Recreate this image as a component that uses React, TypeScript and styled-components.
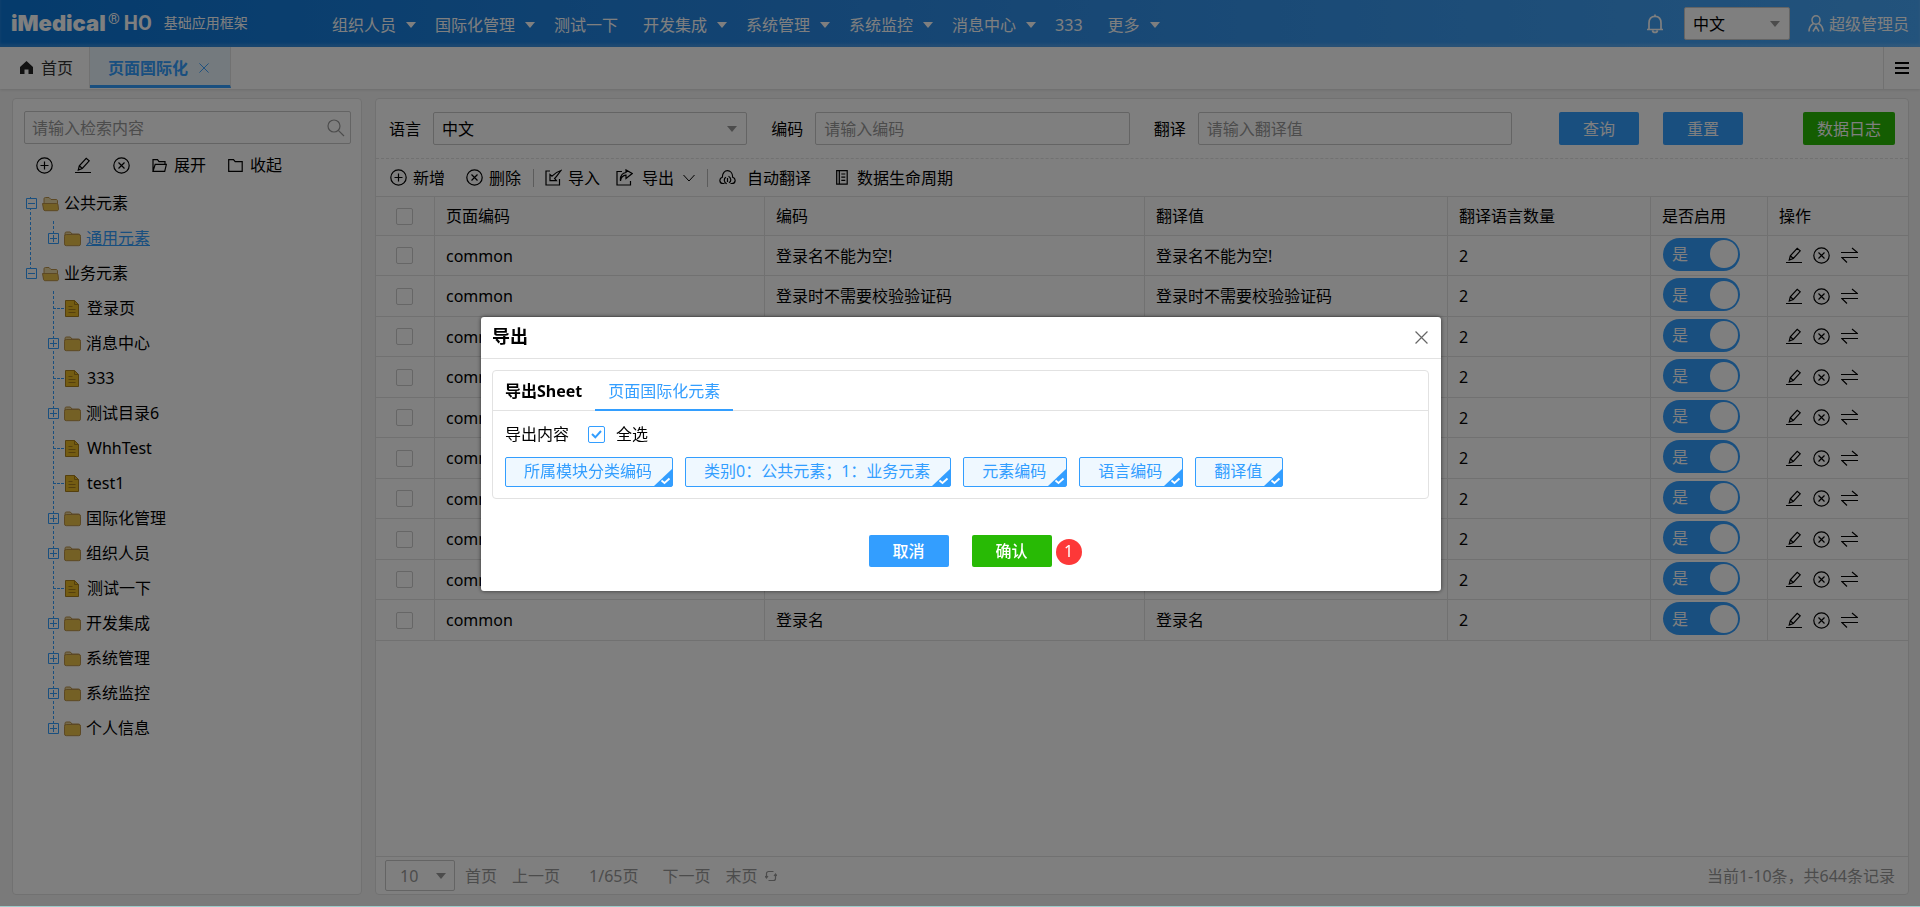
import React from "react";
import styled, { createGlobalStyle } from "styled-components";

const BLUE = "#339eff";
const GREEN = "#28ba05";
const LINE = "#e2e2e2";
const MUTED = "#999";

const GlobalStyle = createGlobalStyle`
  * { box-sizing: border-box; }
  body {
    margin: 0;
    background: #f5f5f5;
    color: #000;
    font-family: "Noto Sans", "Noto Sans CJK SC", sans-serif;
    font-size: 16px;
    line-height: 24px;
  }
  button, input, select { font: inherit; color: inherit; margin: 0; }
  button { border: 0; padding: 0; background: none; cursor: pointer; }
  ul { list-style: none; margin: 0; padding: 0; }
  svg { display: block; flex: none; }
`;

const Page = styled.div`
  display: flex;
  flex-direction: column;
  min-height: 100vh;
  border-bottom: 1px solid #9ccac9;
`;

/* ---------- header ---------- */

const Header = styled.header`
  display: flex;
  align-items: center;
  height: 47px;
  padding: 0 11px 0 11px;
  color: #fff;
  background: linear-gradient(to right, #0a76d8, #2a8ae6 45%, #46a6f8);
  box-shadow: inset 0 -3px 3px rgba(255, 255, 255, 0.15);
`;

const Brand = styled.div`
  display: flex;
  align-items: center;
  width: 321px;
  padding-bottom: 2px;
`;

const Logo = styled.span`
  width: 95px;
  font-family: Inter, sans-serif;
  font-weight: 900;
  font-size: 22px;
`;

const Registered = styled.span`
  align-self: flex-start;
  margin: 0 4px 0 2px;
  font-family: Roboto, sans-serif;
  font-size: 15px;
  line-height: 16px;
`;

const LogoSuffix = styled.span`
  font-family: Roboto, sans-serif;
  font-weight: 700;
  font-size: 20px;
`;

const ProductName = styled.span`
  margin-left: 12px;
  font-size: 14px;
`;

const MainNav = styled.nav`
  display: flex;
  flex: 1;
  padding-top: 2px;
`;

const NavItem = styled.a<{ $plain?: boolean }>`
  display: flex;
  align-items: center;
  gap: 10px;
  margin-right: ${(p) => (p.$plain ? 25 : 19)}px;
  color: #fff;
  text-decoration: none;
  white-space: nowrap;
`;

const HeaderTools = styled.div`
  display: flex;
  align-items: center;
`;

const LanguageSlot = styled.div`
  width: 106px;
  margin: 0 18px 0 20px;
  color: #000;
`;

const UserButton = styled.button`
  display: flex;
  align-items: center;
  gap: 5px;
  color: #fff;
`;

/* ---------- fields ---------- */

const SelectWrap = styled.div<{ $small?: boolean }>`
  display: grid;
  align-items: center;
  height: ${(p) => (p.$small ? 31 : 33)}px;
  border: 1px solid #c8c8c8;
  border-radius: 2px;
  background: #fff;

  select {
    grid-area: 1 / 1;
    width: 100%;
    height: 100%;
    padding: 0 ${(p) => (p.$small ? 14 : 8)}px;
    border: 0;
    background: none;
    appearance: none;
  }
  svg {
    grid-area: 1 / 1;
    justify-self: end;
    margin-right: ${(p) => (p.$small ? 8 : 9)}px;
    color: ${MUTED};
    pointer-events: none;
  }
`;

const TextInput = styled.input`
  width: 100%;
  height: 33px;
  padding: 0 8px;
  border: 1px solid #c8c8c8;
  border-radius: 2px;
  background: #fff;
  &::placeholder { color: ${MUTED}; opacity: 1; }
`;

const Button = styled.button<{ $color?: string; $strong?: boolean }>`
  position: relative;
  height: ${(p) => (p.$strong ? 32 : 33)}px;
  min-width: 80px;
  padding: 0 14px;
  border-radius: 2px;
  background: ${(p) => p.$color ?? BLUE};
  color: #fff;
  font-weight: ${(p) => (p.$strong ? 500 : 400)};
  white-space: nowrap;
`;

/* ---------- page tabs ---------- */

const TabStrip = styled.div`
  display: flex;
  height: 42px;
  background: #fff;
  box-shadow: 0 1px 3px rgba(0, 0, 0, 0.12);
`;

const PageTab = styled.button<{ $active?: boolean }>`
  display: flex;
  align-items: center;
  gap: ${(p) => (p.$active ? 11 : 8)}px;
  height: 41px;
  padding: ${(p) => (p.$active ? "3px 21px 0 18px" : "0 16px 0 20px")};
  border-right: 1px solid ${LINE};
  border-bottom: ${(p) => (p.$active ? `3px solid ${BLUE}` : "0")};
  background: ${(p) => (p.$active ? "#e8f4fc" : "#fff")};
  color: ${(p) => (p.$active ? BLUE : "#333")};
  font-weight: ${(p) => (p.$active ? 700 : 400)};
`;

const TabMenuButton = styled.button`
  display: flex;
  align-items: center;
  justify-content: center;
  width: 37px;
  margin-left: auto;
  border-left: 1px solid ${LINE};
`;

/* ---------- panels ---------- */

const Main = styled.main`
  display: flex;
  flex: 1;
  gap: 13px;
  padding: 9px 11px 11px 12px;
`;

const Panel = styled.section`
  display: flex;
  flex-direction: column;
  border: 1px solid ${LINE};
  border-radius: 4px;
  background: #fff;
`;

const TreePanel = styled(Panel)`
  width: 350px;
  flex: none;
  padding: 12px 10px 0 11px;
`;

const SearchBox = styled.div`
  display: flex;
  align-items: center;
  height: 33px;
  padding-right: 5px;
  border: 1px solid #c8c8c8;
  border-radius: 2px;
  color: ${MUTED};

  input {
    flex: 1;
    min-width: 0;
    padding: 0 7px;
    border: 0;
    background: none;
    outline: none;
  }
  input::placeholder { color: ${MUTED}; opacity: 1; }
`;

const TreeTools = styled.div`
  display: flex;
  align-items: center;
  height: 42px;
  padding-left: 12px;
  gap: 22px;
`;

const ToolButton = styled.button<{ $gap?: number }>`
  display: flex;
  align-items: center;
  gap: ${(p) => p.$gap ?? 7}px;
  white-space: nowrap;
`;

const dashes = `repeating-linear-gradient(to bottom, ${BLUE} 0 3px, transparent 3px 5px)`;

const Tree = styled.ul`
  padding-left: 2px;
  background: ${dashes} no-repeat 6px 11px / 1px 82px;
`;

const Branch = styled.ul`
  margin-left: 22px;
  background: ${dashes} no-repeat 5px 0 / 1px calc(100% - 14px);
`;

const TreeRow = styled.div`
  display: flex;
  align-items: center;
  gap: 5px;
  height: 35px;
`;

const FileStem = styled.span`
  width: 11px;
  margin: 0 -5px 0 5px;
  border-top: 1px dashed ${BLUE};
`;

const TreeLabel = styled.a<{ $active?: boolean }>`
  padding-bottom: 2px;
  color: ${(p) => (p.$active ? BLUE : "#000")};
  text-decoration: ${(p) => (p.$active ? "underline" : "none")};
`;

/* ---------- data panel ---------- */

const DataPanel = styled(Panel)`
  flex: 1;
  min-width: 0;
`;

const FilterForm = styled.form`
  display: flex;
  gap: 24px;
  padding: 13px 13px 13px 13px;
  border-bottom: 1px dashed ${LINE};
`;

const Field = styled.div`
  display: flex;
  flex: 1;
  align-items: center;
  gap: 12px;
  white-space: nowrap;

  > :last-child { flex: 1; min-width: 0; }
`;

const FilterActions = styled.div`
  display: flex;
  gap: 24px;
  margin-left: 23px;

  > :last-child { margin-left: 36px; }
`;

const Toolbar = styled.div`
  display: flex;
  align-items: center;
  gap: 22px;
  height: 37px;
  padding-left: 14px;
`;

const ToolGroup = styled.div<{ $gap?: number }>`
  display: flex;
  align-items: center;
  gap: ${(p) => p.$gap ?? 21}px;

  & + & {
    margin-left: -10px;
    padding-left: 12px;
    background: linear-gradient(#b8b8b8, #b8b8b8) no-repeat 0 50% / 1px 18px;
  }
`;

const Table = styled.table`
  width: 100%;
  table-layout: fixed;
  border-collapse: separate;
  border-spacing: 0;
  border-top: 1px solid ${LINE};

  th, td {
    height: 40px;
    padding: 0 11px;
    border-right: 1px solid ${LINE};
    border-bottom: 1px solid ${LINE};
    text-align: left;
    font-weight: 400;
    white-space: nowrap;
    overflow: hidden;
  }
  th { height: 39px; background: #fcfcfc; }
  tbody tr:nth-child(even) td { height: 41px; }
  th:first-child, td:first-child { padding: 0 0 0 20px; }
  th:last-child, td:last-child { border-right: 0; }
`;

const Col = styled.col<{ $w: number }>`
  width: ${(p) => p.$w}px;
`;

const CheckBox = styled.input`
  display: block;
  width: 17px;
  height: 17px;
  border: 1px solid #ccc;
  border-radius: 2px;
  background: #fff;
  appearance: none;
`;

const SwitchTrack = styled.label`
  display: flex;
  align-items: center;
  justify-content: space-between;
  width: 77px;
  height: 33px;
  margin-bottom: 3px;
  margin-left: 1px;
  padding: 0 2px 0 9px;
  border-radius: 17px;
  background: ${BLUE};
  color: #fff;

  input {
    position: absolute;
    opacity: 0;
    pointer-events: none;
  }
`;

const SwitchKnob = styled.span`
  width: 28px;
  height: 28px;
  border-radius: 50%;
  background: #fff;
`;

const RowActions = styled.div`
  display: flex;
  gap: 11px;
  padding-left: 7px;
`;

const Pager = styled.footer`
  display: flex;
  align-items: center;
  height: 38px;
  margin-top: auto;
  padding: 0 13px 0 9px;
  border-top: 1px solid ${LINE};
  color: ${MUTED};
`;

const PageSize = styled.div`
  width: 70px;
  margin-right: 10px;
`;

const PagerLinks = styled.div`
  display: flex;
  align-items: center;
  gap: 15px;
`;

const PageNumber = styled.span`
  margin: 0 9px 0 14px;
`;

const RefreshButton = styled.button`
  margin-left: -7px;
`;

const Total = styled.span`
  margin-left: auto;
`;

/* ---------- dialog ---------- */

const Backdrop = styled.div`
  position: fixed;
  inset: 0 0 1px;
  display: flex;
  align-items: center;
  justify-content: center;
  padding: 2px 0 0 2px;
  background: rgba(0, 0, 0, 0.5);
`;

const Dialog = styled.div`
  width: 50vw;
  min-width: 860px;
  border-radius: 3px;
  background: #fff;
  box-shadow: 0 0 4px rgba(0, 0, 0, 0.6);
`;

const DialogHead = styled.div`
  display: flex;
  align-items: center;
  justify-content: space-between;
  height: 42px;
  padding: 0 13px 0 11px;
  border-bottom: 1px solid ${LINE};

  h2 {
    margin: 0;
    padding-bottom: 4px;
    font-size: 18px;
    line-height: 24px;
    font-weight: 700;
  }
`;

const ExportBox = styled.div`
  margin: 11px 12px 0 11px;
  border: 1px solid ${LINE};
  border-radius: 4px;
`;

const SheetTabs = styled.div`
  display: flex;
  gap: 13px;
  height: 40px;
  padding-left: 12px;
  border-bottom: 1px solid ${LINE};
`;

const SheetCaption = styled.strong`
  line-height: 40px;
`;

const SheetTab = styled.button`
  height: 40px;
  padding: 2px 13px 0;
  border-bottom: 2px solid ${BLUE};
  color: ${BLUE};
`;

const ExportBody = styled.div`
  padding: 11px 12px;
`;

const CheckLine = styled.div`
  display: flex;
  align-items: center;
  height: 24px;
  margin-bottom: 11px;

  label { display: flex; align-items: center; gap: 11px; margin-left: 19px; }
`;

const TickBox = styled.span`
  display: grid;
  place-items: center;
  width: 17px;
  height: 17px;

  > * { grid-area: 1 / 1; }
  input { border-color: ${BLUE}; }
  svg { color: ${BLUE}; pointer-events: none; }
`;

const Chips = styled.div`
  display: flex;
  gap: 12px;
`;

const Chip = styled.button`
  position: relative;
  height: 30px;
  padding: 0 20px 2px 18px;
  border: 1px solid ${BLUE};
  border-radius: 2px;
  background: #eff8ff;
  color: ${BLUE};
  white-space: nowrap;

  svg { position: absolute; right: 0; bottom: 0; }
`;

const DialogFoot = styled.div`
  display: flex;
  justify-content: center;
  gap: 23px;
  padding: 36px 2px 24px 0;
`;

const StepBadge = styled.span`
  position: absolute;
  left: 84px;
  top: 4px;
  width: 26px;
  height: 26px;
  border-radius: 50%;
  background: #fd3838;
  color: #fff;
  font-weight: 400;
  line-height: 25px;
`;

/* ---------- icons ---------- */

const Caret = () => (
  <svg width="10" height="6" viewBox="0 0 10 6" fill="currentColor"><path d="M0 0h10L5 6z" /></svg>
);

const stroke = { fill: "none", stroke: "currentColor", strokeWidth: 1.2 };

const PlusCircle = () => (
  <svg width="17" height="17" viewBox="0 0 17 17" {...stroke}><circle cx="8.500" cy="8.500" r="7.700" /><path d="M8.500 4.500v8M4.500 8.500h8" /></svg>
);
const CrossCircle = () => (
  <svg width="17" height="17" viewBox="0 0 17 17" {...stroke}><circle cx="8.500" cy="8.500" r="7.700" /><path d="M5.500 5.500l6 6M11.500 5.500l-6 6" /></svg>
);
const Pencil = () => (
  <svg width="16" height="17" viewBox="0 0 16 17" {...stroke}><path d="M3.300 13l1-4.200L11.200 1.300l3 2.600-6.900 7.600z M4.300 8.800l3 2.700M0 15.500h16" /></svg>
);
const Swap = () => (
  <svg width="17" height="17" viewBox="0 0 17 17" {...stroke}><path d="M0 5.500h16.500L11 1M17 10.500H.800L6 15.500" /></svg>
);
const FolderOpenLine = () => (
  <svg width="15" height="13" viewBox="0 0 15 13" {...stroke}><path d="M1 12.300V.700h4.500l1.500 2h6v2.600M1 12.300l2.200-7h11.200l-1.700 7z" /></svg>
);
const FolderLine = () => (
  <svg width="15" height="13" viewBox="0 0 15 13" {...stroke}><path d="M.700 12.300V.700h4.800l1.700 2h7v9.600z" /></svg>
);
const ImportIcon = () => (
  <svg width="17" height="17" viewBox="0 0 17 17" {...stroke}><path d="M5 2H1v14h13.500v-6" /><path d="M5 5.500v6.200h6.400L9.600 9.500C12 7.500 13.200 5 16 1.500c-3.500 1-6 2.500-9 5.700z" /></svg>
);
const ExportIcon = () => (
  <svg width="17" height="17" viewBox="0 0 17 17" {...stroke}><path d="M6 2.500H1V16h13.500v-4" /><path d="M4.500 12c.5-3.500 2-5.500 5.500-5.800V9.500l6.200-5L10 .900v2.600C6 4.200 4 7.500 4.500 12z" /></svg>
);
const ChevronDown = () => (
  <svg width="12" height="8" viewBox="0 0 12 8" {...stroke} strokeWidth="1"><path d="M.500 1L6 7l5.500-6" /></svg>
);
const CloudSync = () => (
  <svg width="17" height="15" viewBox="0 0 17 15" {...stroke}><path d="M5.500 13.500H4C.300 13.500-.300 8.500 3.300 7.300 3.300-1.500 13.700-1.500 13.700 7.300c3.600 1.200 3 6.200-.700 6.200h-1.500" /><path d="M7.700 13.800C4.500 12 4.600 8.300 7 7.300M9.500 6.200c3 1.600 3 5.500.400 6.600M8.500 8v4" /></svg>
);
const Notebook = () => (
  <svg width="12" height="15" viewBox="0 0 12 15" {...stroke}><path d="M.700.700h10.500v13.500H.700zM3.300.700v13.500M5.300 4h4M5.300 7.200h4M5.300 10.400h4" /></svg>
);
const SearchIcon = () => (
  <svg width="18" height="18" viewBox="0 0 18 18" {...stroke}><circle cx="7" cy="7" r="6" /><path d="M11.300 11.300l5.700 5.700" /></svg>
);
const HomeIcon = () => (
  <svg width="13" height="13" viewBox="0 0 13 13" fill="#222"><path d="M6.500 0L13 6v7H8.500V8.500h-4V13H0V6z" /></svg>
);
const Cross = ({ size, color = "currentColor" }: { size: number; color?: string }) => (
  <svg width={size} height={size} viewBox="0 0 12 12" fill="none" stroke={color} strokeWidth="1.100"><path d="M.500.500l11 11M11.500.500l-11 11" /></svg>
);
const MenuIcon = () => (
  <svg width="14" height="12" viewBox="0 0 14 12"><path d="M0 0h14v2H0zM0 5h14v2H0zM0 10h14v2H0z" /></svg>
);
const Bell = () => (
  <svg width="18" height="20" viewBox="0 0 18 20" fill="none" stroke="#fff" strokeWidth="1.700"><path d="M1 15.500h16M3 15V9c0-4 2.200-6.700 6-6.700S15 5 15 9v6M9 .500v2M6.500 16.500c.5 2.600 4.500 2.600 5 0" /></svg>
);
const UserIcon = () => (
  <svg width="16" height="17" viewBox="0 0 16 17" fill="none" stroke="#fff" strokeWidth="1.500"><ellipse cx="8" cy="5" rx="4" ry="4.200" /><path d="M5.500 8.500C2.800 10 1 12.500 1 16.500M10.500 8.500c2.700 1.500 4.500 4 4.500 8M5 16.500l3-5 3 5" /></svg>
);
const Refresh = () => (
  <svg width="12" height="12" viewBox="0 0 12 12" {...stroke}><path d="M1.500 7.500v-4a2 2 0 0 1 2-2h5M10.500 4.500v4a2 2 0 0 1-2 2h-5M0 6l1.500 2L3 6M9 6l1.500-2L12 6" /></svg>
);
const Expander = ({ open }: { open?: boolean }) => (
  <svg width="11" height="11" viewBox="0 0 11 11" fill="#fff" stroke={BLUE}><path d={`M.500.500h10v10h-10zM2 5.500h7${open ? "" : "M5.500 2v7"}`} /></svg>
);
const FolderIcon = ({ open }: { open?: boolean }) => (
  <svg width="17" height="16" viewBox="0 0 17 16" stroke="#b89048">
    {open ? (
      <>
        <path d="M2 13.500V3C2 2 2.500 1.500 3.500 1.500H7l2 2h5c1 0 1.500.500 1.500 1.500v8.500z" fill="#ead9a4" />
        <path d="M.500 7.500h14.200c.8 0 1.200.500 1.300 1.200l.5 4.300c0 1-.500 1.700-1.500 1.700H3.200c-1 0-1.500-.500-1.700-1.500z" fill="#e9c14a" />
      </>
    ) : (
      <>
        <path d="M1 5V2.700C1 1.500 1.500 1 2.500 1h3.800L8 3h6.500c1 0 1.500.500 1.500 2z" fill="#e8d49a" />
        <rect x=".500" y="3.500" width="16" height="11.200" rx="1.800" fill="#e9c14a" />
      </>
    )}
  </svg>
);
const FileIcon = () => (
  <svg width="18" height="17" viewBox="0 0 18 17" stroke="#a87f1c"><path d="M1.500.500h9l4 4v12h-13z" fill="#e8b824" /><path d="M10.500.500v4h4M4.500 6.500h4M4.500 9.500h7M4.500 12.500h7" fill="none" /></svg>
);
const Tick = () => (
  <svg width="11" height="9" viewBox="0 0 11 9" fill="none" stroke="currentColor" strokeWidth="2"><path d="M1 4l3.300 3.300L10 1" /></svg>
);
const ChipCorner = () => (
  <svg width="18" height="17" viewBox="0 0 18 17"><path d="M18 0v17H0z" fill={BLUE} /><path d="M7.500 11.500l3 2.500 5-4.500" fill="none" stroke="#fff" strokeWidth="1.800" /></svg>
);

/* ---------- data ---------- */

const navItems: [string, boolean][] = [
  ["组织人员", true], ["国际化管理", true], ["测试一下", false], ["开发集成", true],
  ["系统管理", true], ["系统监控", true], ["消息中心", true], ["333", false], ["更多", true],
];

type Node = { name: string; file?: boolean; active?: boolean };

const tree: { name: string; items: Node[] }[] = [
  { name: "公共元素", items: [{ name: "通用元素", active: true }] },
  {
    name: "业务元素",
    items: [
      { name: "登录页", file: true }, { name: "消息中心" }, { name: "333", file: true },
      { name: "测试目录6" }, { name: "WhhTest", file: true }, { name: "test1", file: true },
      { name: "国际化管理" }, { name: "组织人员" }, { name: "测试一下", file: true },
      { name: "开发集成" }, { name: "系统管理" }, { name: "系统监控" }, { name: "个人信息" },
    ],
  },
];

const rows = [
  "登录名不能为空!", "登录时不需要校验验证码", "登录", "密码", "验证码", "忘记密码",
  "请输入密码", "用户", "登录密码", "登录名",
];

const chips = ["所属模块分类编码", "类别0：公共元素；1：业务元素", "元素编码", "语言编码", "翻译值"];

const widths = [59, 330, 380, 303, 203, 117, 140];
const heads = ["页面编码", "编码", "翻译值", "翻译语言数量", "是否启用", "操作"];

export default function App() {
  return (
    <>
      <GlobalStyle />
      <Page>
        <Header>
          <Brand>
            <Logo>iMedical</Logo>
            <Registered>®</Registered>
            <LogoSuffix>HO</LogoSuffix>
            <ProductName>基础应用框架</ProductName>
          </Brand>
          <MainNav>
            {navItems.map(([name, menu]) => (
              <NavItem key={name} href="#" $plain={!menu}>{name}{menu && <Caret />}</NavItem>
            ))}
          </MainNav>
          <HeaderTools>
            <button aria-label="通知"><Bell /></button>
            <LanguageSlot>
              <SelectWrap>
                <select aria-label="界面语言"><option>中文</option></select>
                <Caret />
              </SelectWrap>
            </LanguageSlot>
            <UserButton><UserIcon />超级管理员</UserButton>
          </HeaderTools>
        </Header>

        <TabStrip>
          <PageTab><HomeIcon />首页</PageTab>
          <PageTab $active>页面国际化<Cross size={10} /></PageTab>
          <TabMenuButton aria-label="菜单"><MenuIcon /></TabMenuButton>
        </TabStrip>

        <Main>
          <TreePanel>
            <SearchBox>
              <input aria-label="检索" placeholder="请输入检索内容" />
              <button aria-label="搜索"><SearchIcon /></button>
            </SearchBox>
            <TreeTools>
              <ToolButton aria-label="新增"><PlusCircle /></ToolButton>
              <ToolButton aria-label="编辑"><Pencil /></ToolButton>
              <ToolButton aria-label="删除"><CrossCircle /></ToolButton>
              <ToolButton><FolderOpenLine />展开</ToolButton>
              <ToolButton><FolderLine />收起</ToolButton>
            </TreeTools>
            <Tree>
              {tree.map((group) => (
                <li key={group.name}>
                  <TreeRow><Expander open /><FolderIcon open /><TreeLabel href="#">{group.name}</TreeLabel></TreeRow>
                  <Branch>
                    {group.items.map((item) => (
                      <li key={item.name}>
                        <TreeRow>
                          {item.file ? <FileStem /> : <Expander />}
                          {item.file ? <FileIcon /> : <FolderIcon />}
                          <TreeLabel href="#" $active={item.active}>{item.name}</TreeLabel>
                        </TreeRow>
                      </li>
                    ))}
                  </Branch>
                </li>
              ))}
            </Tree>
          </TreePanel>

          <DataPanel>
            <FilterForm onSubmit={(e) => e.preventDefault()}>
              <Field>
                <label htmlFor="lang">语言</label>
                <SelectWrap><select id="lang"><option>中文</option></select><Caret /></SelectWrap>
              </Field>
              <Field>
                <label htmlFor="code">编码</label>
                <TextInput id="code" placeholder="请输入编码" />
              </Field>
              <Field>
                <label htmlFor="trans">翻译</label>
                <TextInput id="trans" placeholder="请输入翻译值" />
              </Field>
              <FilterActions>
                <Button>查询</Button>
                <Button type="reset">重置</Button>
                <Button type="button" $color={GREEN}>数据日志</Button>
              </FilterActions>
            </FilterForm>

            <Toolbar>
              <ToolGroup>
                <ToolButton $gap={6}><PlusCircle />新增</ToolButton>
                <ToolButton $gap={6}><CrossCircle />删除</ToolButton>
              </ToolGroup>
              <ToolGroup $gap={16}>
                <ToolButton $gap={6}><ImportIcon />导入</ToolButton>
                <ToolButton $gap={9}><ExportIcon />导出<ChevronDown /></ToolButton>
              </ToolGroup>
              <ToolGroup $gap={25}>
                <ToolButton $gap={11}><CloudSync />自动翻译</ToolButton>
                <ToolButton $gap={9}><Notebook />数据生命周期</ToolButton>
              </ToolGroup>
            </Toolbar>

            <Table>
              <colgroup>{widths.map((w, i) => <Col key={i} $w={w} />)}</colgroup>
              <thead>
                <tr>
                  <th><CheckBox type="checkbox" aria-label="全选" /></th>
                  {heads.map((h) => <th key={h}>{h}</th>)}
                </tr>
              </thead>
              <tbody>
                {rows.map((text) => (
                  <tr key={text}>
                    <td><CheckBox type="checkbox" aria-label={text} /></td>
                    <td>common</td>
                    <td>{text}</td>
                    <td>{text}</td>
                    <td>2</td>
                    <td>
                      <SwitchTrack><input type="checkbox" defaultChecked />是<SwitchKnob /></SwitchTrack>
                    </td>
                    <td>
                      <RowActions>
                        <button aria-label="编辑"><Pencil /></button>
                        <button aria-label="删除"><CrossCircle /></button>
                        <button aria-label="翻译"><Swap /></button>
                      </RowActions>
                    </td>
                  </tr>
                ))}
              </tbody>
            </Table>

            <Pager>
              <PageSize>
                <SelectWrap $small>
                  <select aria-label="每页条数"><option>10</option></select>
                  <Caret />
                </SelectWrap>
              </PageSize>
              <PagerLinks>
                <button>首页</button>
                <button>上一页</button>
                <PageNumber>1/65页</PageNumber>
                <button>下一页</button>
                <button>末页</button>
                <RefreshButton aria-label="刷新"><Refresh /></RefreshButton>
              </PagerLinks>
              <Total>当前1-10条，共644条记录</Total>
            </Pager>
          </DataPanel>
        </Main>
      </Page>

      <Backdrop>
        <Dialog role="dialog" aria-modal="true" aria-labelledby="dialog-title">
          <DialogHead>
            <h2 id="dialog-title">导出</h2>
            <button aria-label="关闭"><Cross size={13} color="#666" /></button>
          </DialogHead>
          <ExportBox>
            <SheetTabs>
              <SheetCaption>导出Sheet</SheetCaption>
              <SheetTab>页面国际化元素</SheetTab>
            </SheetTabs>
            <ExportBody>
              <CheckLine>
                导出内容
                <label>
                  <TickBox><CheckBox type="checkbox" defaultChecked /><Tick /></TickBox>
                  全选
                </label>
              </CheckLine>
              <Chips>
                {chips.map((c) => <Chip key={c}>{c}<ChipCorner /></Chip>)}
              </Chips>
            </ExportBody>
          </ExportBox>
          <DialogFoot>
            <Button $strong>取消</Button>
            <Button $strong $color={GREEN}>确认<StepBadge>1</StepBadge></Button>
          </DialogFoot>
        </Dialog>
      </Backdrop>
    </>
  );
}
